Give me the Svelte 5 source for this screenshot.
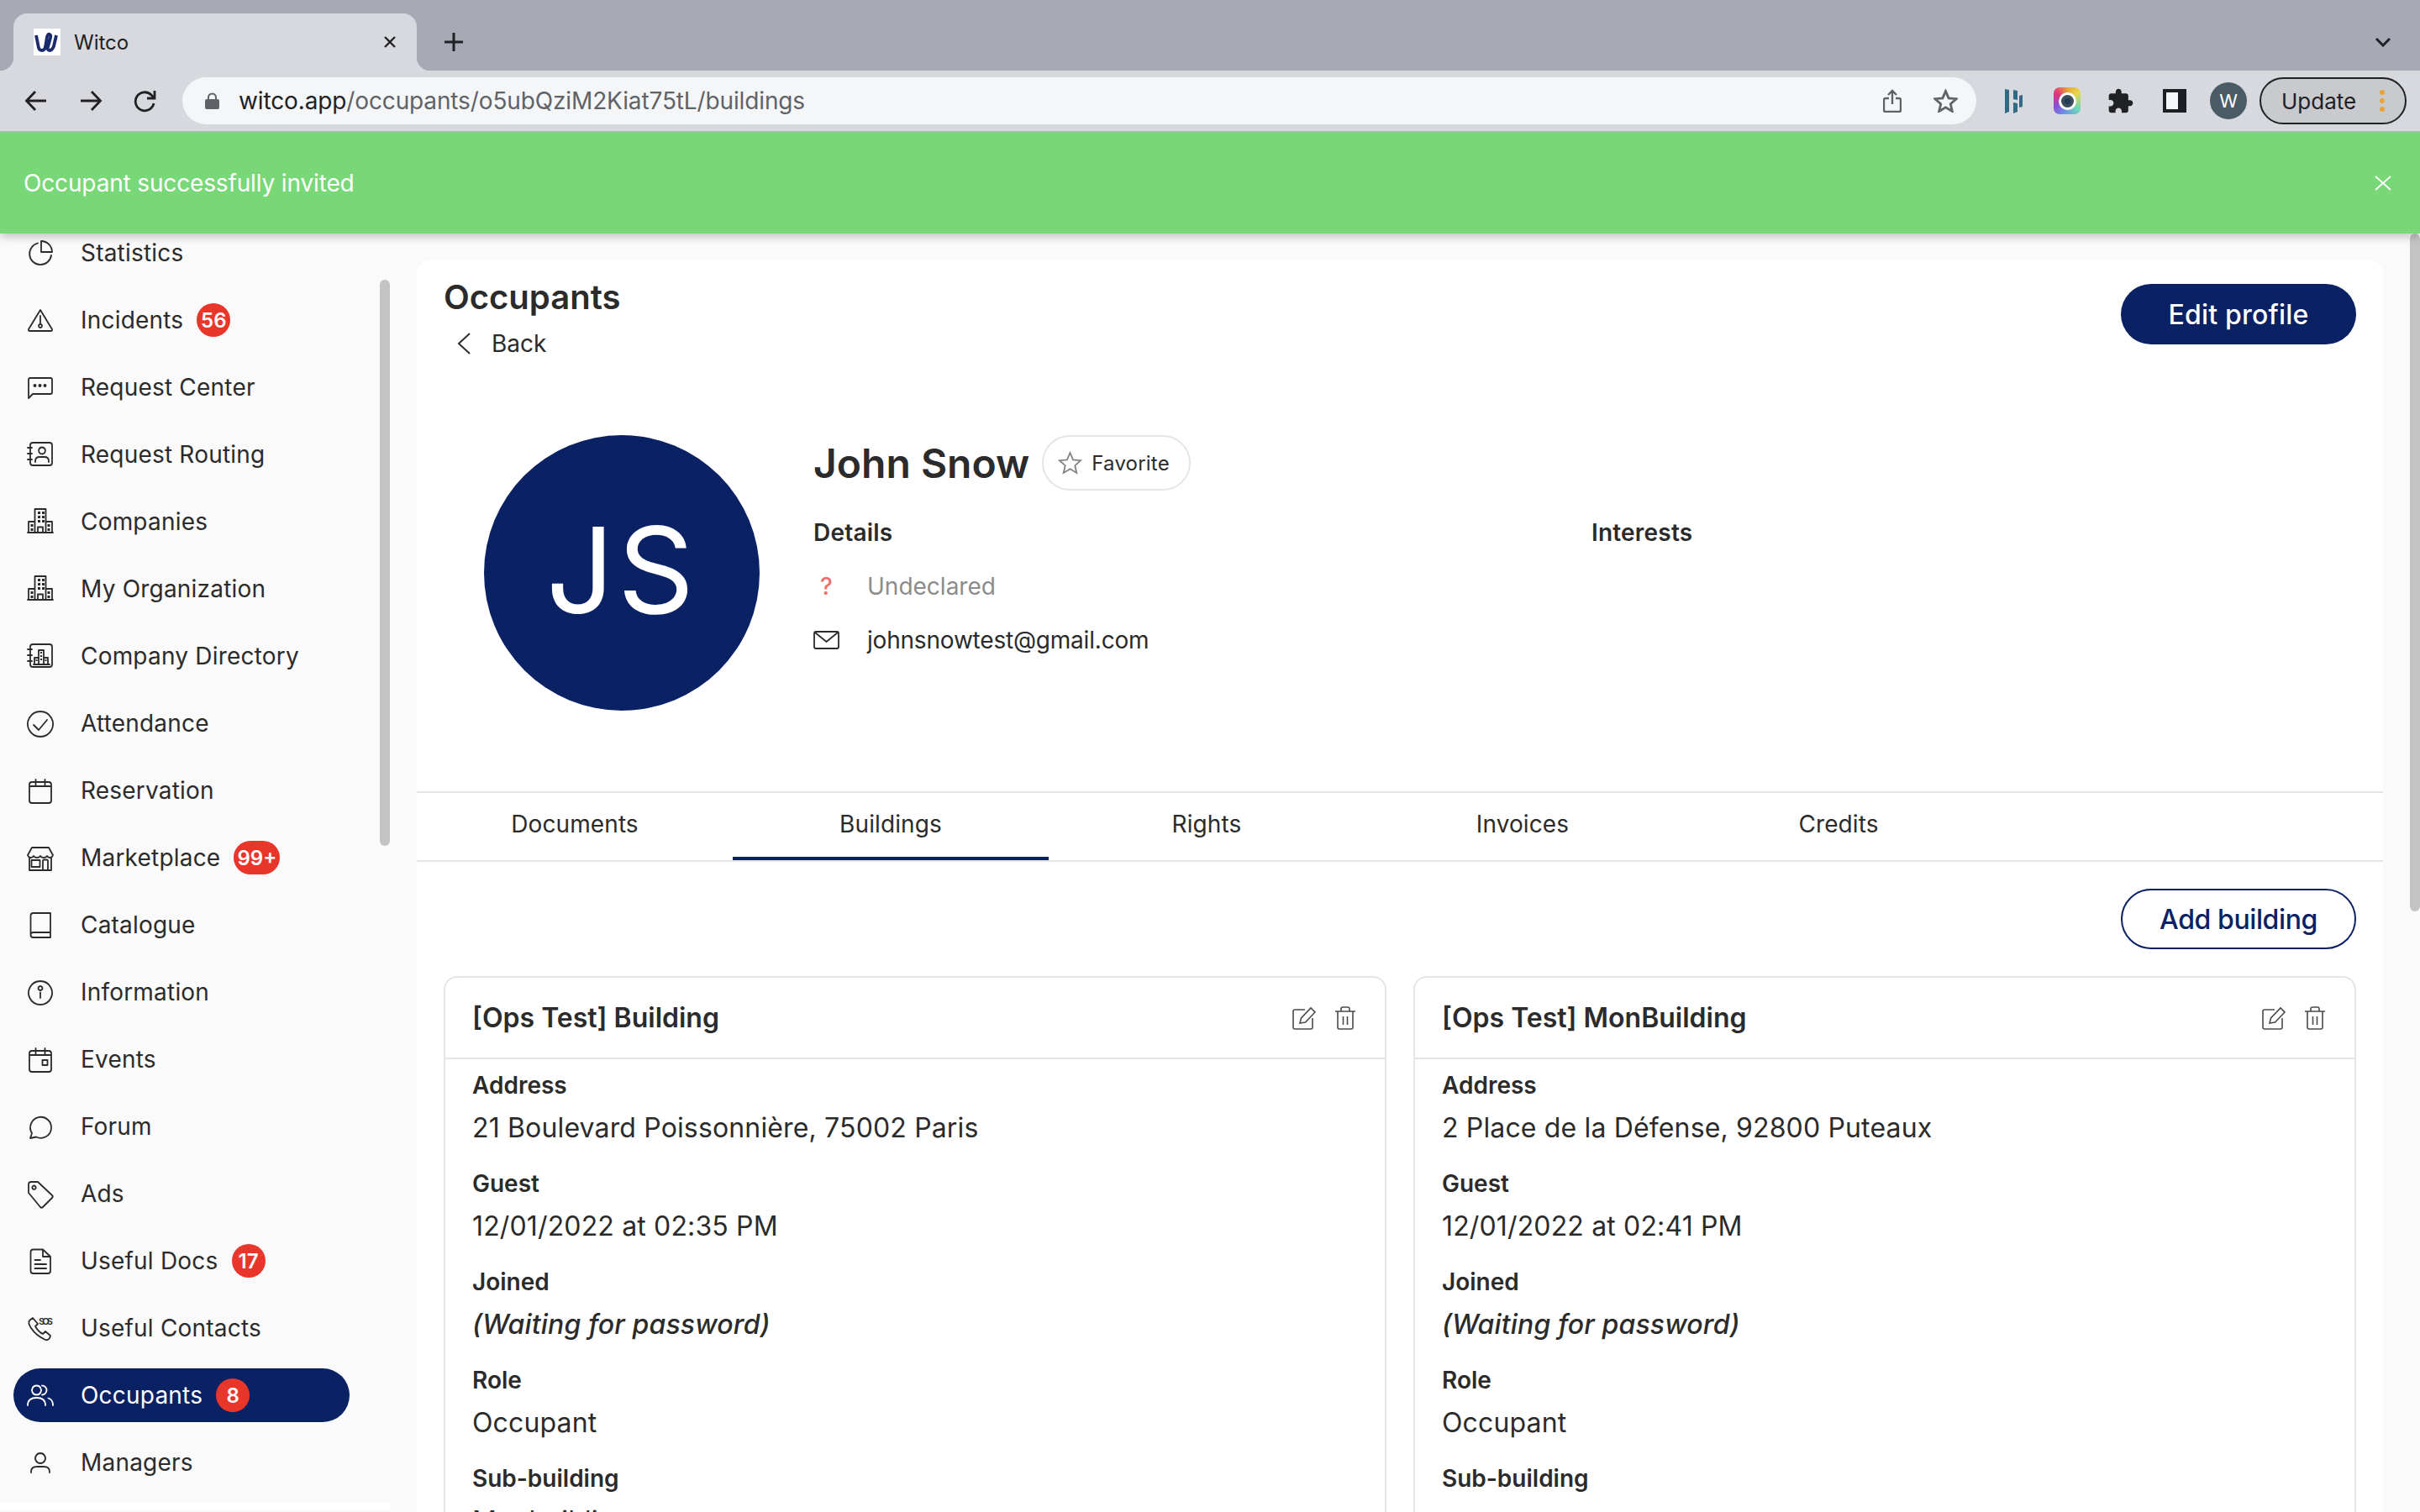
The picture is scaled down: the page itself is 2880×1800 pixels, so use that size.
<script>
  // small helpers so the icon table stays readable
  const dot = (x, y, r) => `M${x - r} ${y}a${r} ${r} 0 1 0 ${2 * r} 0a${r} ${r} 0 1 0 ${-2 * r} 0Z`;
  const sq = (x, y, s = 3) => `M${x} ${y}h${s}v${s}h${-s}Z`;
  const ticks = 'M1 8h5M1 15h5M1 22h5';
  const frame = 'M7 2h20q3 0 3 3v21q0 3-3 3H7q-3 0-3-3V5q0-3 3-3Z';
  const towers =
    'M9.5 29V1h13v28M2 29V16h7.5M22.5 16H30v13M1 29h30M13 29v-6.5h6V29' ;
  const towerWindows = [13, 18, 13, 18, 13, 18].map((x, i) => sq(x, 4 + 5 * Math.floor(i / 2))).join('')
    + sq(4.5, 19) + sq(4.5, 24) + sq(24.5, 19) + sq(24.5, 24);

  const navItems = [
    { label: 'Statistics', d: 'M13 4.5A13 13 0 1 0 29 19M17 2a13 13 0 0 1 13 13H17Z' },
    { label: 'Incidents', badge: '56', d: 'M16 4 30 27q.5 2-1.500 2H3.500q-2 0-1.500-2ZM16 11v9M16 21a2 2 0 1 0 .01 0Z' },
    { label: 'Request Center', d: 'M2 29V7q0-2 2-2h24q2 0 2 2v15q0 2-2 2H7Z', f: dot(9.5, 14, 2) + dot(15.5, 14, 2) + dot(21.500, 14, 2) },
    { label: 'Request Routing', d: `${frame}${ticks}M18 7.500a4 4 0 1 0 .01 0ZM10 25v-1q0-5 5-5h6q5 0 5 5v1` },
    { label: 'Companies', d: towers, f: towerWindows },
    { label: 'My Organization', d: towers, f: towerWindows },
    { label: 'Company Directory', d: `${frame}${ticks}M8 26h19M9 26v-8h5M14 26V9h6v17M20 18h5v8`, f: sq(16, 11, 2) + sq(16, 15, 2) + sq(16, 19, 2) + sq(10.500, 20, 2) + sq(21.500, 20, 2) },
    { label: 'Attendance', d: 'M16 2a15 15 0 1 0 .01 0ZM8 18l6 6 10-12' },
    { label: 'Reservation', d: 'M6 6h20q3 0 3 3v19q0 3-3 3H6q-3 0-3-3V9q0-3 3-3ZM3 11h26M10.500 3v7M21.500 3v7' },
    { label: 'Marketplace', badge: '99+', d: 'M6 4h20l5 9q-1 3-3.500 3T24 14q-1 2-4 2t-4-2q-1 2-4 2t-4-2q-1 2-3.500 2T1 13ZM3 16v15h26V16M5.500 19h10v8h-10ZM19 31V20q0-1.500 1.500-1.500h3Q25 18.500 25 20v11' },
    { label: 'Catalogue', d: 'M28 25H7.500q-3 0-3 3V5q0-3 3-3H28v29H7.500q-3 0-3-3' },
    { label: 'Information', d: 'M16 3a14 14 0 1 0 .01 0ZM16 9a2.500 2.500 0 1 0 .01 0ZM16 16.500V23' },
    { label: 'Events', d: 'M6 6h20q3 0 3 3v19q0 3-3 3H6q-3 0-3-3V9q0-3 3-3ZM3 11h26M10.500 3v7M21.500 3v7M18.500 17h6v6h-6Z' },
    { label: 'Forum', d: 'M4 30l2-6A12.500 12.500 0 1 1 11 28.500Z' },
    { label: 'Ads', d: 'M2 5q0-3 3-3h8l17 16q1.500 1.500 0 3L19 32q-1.500 1.500-3 0L2 15ZM8.500 6.500a2.200 2.200 0 1 0 .01 0Z' },
    { label: 'Useful Docs', badge: '17', d: 'M7.500 2.500H19L28 11v17q0 3-3 3H7.500q-3 0-3-3V5.500q0-3 3-3ZM19 2.500V11h9M9.500 15H16M9.500 20H23M9.500 25H23' },
    { label: 'Useful Contacts', sos: true, d: 'M7 4 3 7q-2 3 2 9 6 9 17 14 3 1 5-2l1-3-6-5-3 3q-5-2-9-9l3-3Z' },
    { label: 'Occupants', badge: '8', active: true, d: 'M11.500 4.500a5.500 5.500 0 1 0 .01 0ZM1 28q0-9 10.500-9T22 28M18 4.500a5.500 5.500 0 0 1 0 11M25.500 19.500Q31 21 31 28' },
    { label: 'Managers', d: 'M16 5a6 6 0 1 0 .01 0ZM5 28v-1q0-6 7-6h8q7 0 7 6v1' }
  ];

  const tabs = ['Documents', 'Buildings', 'Rights', 'Invoices', 'Credits'];

  const buildings = [
    { name: '[Ops Test] Building', address: '21 Boulevard Poissonnière, 75002 Paris', guest: '12/01/2022 at 02:35 PM', sub: 'Monbuilding' },
    { name: '[Ops Test] MonBuilding', address: '2 Place de la Défense, 92800 Puteaux', guest: '12/01/2022 at 02:41 PM', sub: '' }
  ];
</script>

<div class="app">
  <div class="tabstrip">
    <div class="tab">
      <svg class="favicon" viewBox="0 0 32 32">
        <rect width="32" height="32" fill="#fff" />
        <path d="M3 8l3 15q1 3 4 3t4-4l2-12q1-4 3-3t1 4l-3 11q-1 4 2 4t5-5l3-13" fill="none" stroke="#1b2a6b" stroke-width="3.800" />
      </svg>
      <span class="tabtitle">Witco</span>
      <svg class="tabclose" viewBox="0 0 16 16"><path d="M2 2l12 12M14 2 2 14" /></svg>
    </div>
    <svg class="newtab" viewBox="0 0 24 24"><path d="M12 1v22M1 12h22" /></svg>
    <svg class="tabmenu" viewBox="0 0 20 12"><path d="M2 2l8 8 8-8" /></svg>
  </div>

  <div class="toolbar">
    <svg class="navbtn first" viewBox="0 0 28 28"><path d="M26 14H3M13 3 2.500 14 13 25" /></svg>
    <svg class="navbtn" viewBox="0 0 28 28"><path d="M2 14h23M15 3l10.500 11L15 25" /></svg>
    <svg class="navbtn" viewBox="0 0 28 28"><path d="M24 17a11 11 0 1 1-3-10l4 4M25 2v9h-9" /></svg>
    <div class="omnibox">
      <svg class="lock" viewBox="0 0 17 20"><path d="M4 9V6a4.500 4.500 0 0 1 9 0v3" fill="none" stroke="#5f6368" stroke-width="2" /><rect y="8" width="17" height="12" rx="2" fill="#5f6368" /></svg>
      <span class="url">witco.app<span class="urlpath">/occupants/o5ubQziM2Kiat75tL/buildings</span></span>
      <svg class="share" viewBox="0 0 22 28"><path d="M7 11H3q-2 0-2 2v12q0 2 2 2h16q2 0 2-2V13q0-2-2-2h-4M11 18V2M6 7l5-5 5 5" /></svg>
      <svg class="star" viewBox="0 0 29 28"><path d="M14.500 2.500l3.600 8.400 9 .8-6.800 6 2 8.800-7.800-4.700-7.800 4.700 2-8.800-6.800-6 9-.8Z" /></svg>
    </div>
    <svg class="ext dash" viewBox="0 0 21 30">
      <path d="M0 1l5 1v26l-5 2ZM10 2l5 1v11l-5-1ZM10 17l5 1v10l-5 2ZM17 9l4-1v14l-4 1Z" fill="#2f6b85" />
    </svg>
    <div class="ext lens"><span class="lenseye"></span></div>
    <svg class="ext puzzle" viewBox="1.500 .5 22 22"><path d="M20.500 11H19V7c0-1.100-.9-2-2-2h-4V3.500C13 2.120 11.880 1 10.500 1S8 2.120 8 3.500V5H4c-1.100 0-1.990.9-1.990 2v3.800H3.500c1.490 0 2.700 1.210 2.700 2.700s-1.210 2.700-2.700 2.700H2V20c0 1.100.9 2 2 2h3.800v-1.500c0-1.490 1.210-2.700 2.700-2.700 1.490 0 2.700 1.210 2.700 2.700V22H17c1.100 0 2-.9 2-2v-4h1.500c1.380 0 2.500-1.120 2.500-2.500S21.880 11 20.500 11z" fill="#202124" /></svg>
    <div class="ext panel"></div>
    <div class="ext profilebtn">W</div>
    <div class="update">
      <span>Update</span>
      <span class="kebab"><i></i><i></i><i></i></span>
    </div>
  </div>

  <div class="page">
    <div class="banner">
      <span>Occupant successfully invited</span>
      <svg class="bannerclose" viewBox="0 0 20 18"><path d="M1 1l18 16M19 1 1 17" /></svg>
    </div>

    <aside class="sidebar">
      {#each navItems as item}
        <div class="navrow" class:active={item.active}>
          <svg class="navicon" viewBox="0 0 32 32">
            <path d={item.d} />
            {#if item.f}<path class="solid" d={item.f} />{/if}
            {#if item.sos}<text x="14" y="12" textLength="17" class="sos">SOS</text>{/if}
          </svg>
          <span class="navlabel">{item.label}</span>
          {#if item.badge}<span class="badge" class:wide={item.badge.length > 2}>{item.badge}</span>{/if}
        </div>
      {/each}
      <div class="sidefoot"></div>
      <div class="thumb"></div>
    </aside>

    <main class="main">
      <div class="head">
        <div>
          <h1>Occupants</h1>
          <div class="back">
            <svg viewBox="0 0 16 26"><path d="M15 1 2 13l13 12" /></svg>
            <span>Back</span>
          </div>
        </div>
        <button class="btn solid-btn">Edit profile</button>
      </div>

      <section class="profile">
        <div class="avatar">JS</div>
        <div class="info">
          <div class="namerow">
            <h2>John Snow</h2>
            <div class="favorite">
              <svg viewBox="0 0 29 28"><path d="M14.500 2l3.600 8.400 9 .8-6.800 6 2 8.800-7.800-4.700-7.800 4.700 2-8.800-6.800-6 9-.8Z" /></svg>
              <span>Favorite</span>
            </div>
          </div>
          <div class="detailcols">
            <div>
              <div class="sublabel">Details</div>
              <div class="contact muted"><span class="qmark">?</span><span>Undeclared</span></div>
              <div class="contact">
                <svg class="mail" viewBox="0 0 31 22"><path d="M3 1h25q2 0 2 2v16q0 2-2 2H3q-2 0-2-2V3q0-2 2-2ZM2 2l13.500 11L29 2" /></svg>
                <span class="email">johnsnowtest@gmail.com</span>
              </div>
            </div>
            <div class="sublabel">Interests</div>
          </div>
        </div>
      </section>

      <nav class="tabsbar">
        {#each tabs as t}
          <div class="tabitem" class:current={t === 'Buildings'}>{t}</div>
        {/each}
      </nav>

      <div class="addrow"><button class="btn outline-btn">Add building</button></div>

      <div class="buildings">
        {#each buildings as b}
          <article class="bcard">
            <header class="bhead">
              <span class="btitle">{b.name}</span>
              <svg class="baction" viewBox="0 0 28 28"><path d="M15 4H3q-2 0-2 2v19q0 2 2 2h19q2 0 2-2V14M9 20l1.500-6L22 2l5 5-11.500 12Z" /></svg>
              <svg class="baction trash" viewBox="0 0 26 28"><path d="M1 6h24M8 6V3q0-2 2-2h6q2 0 2 2v3M4 6v19q0 2 2 2h14q2 0 2-2V6M10.500 12v10M15.500 12v10" /></svg>
            </header>
            <div class="bbody">
              <div class="flabel">Address</div>
              <div class="fvalue">{b.address}</div>
              <div class="flabel">Guest</div>
              <div class="fvalue">{b.guest}</div>
              <div class="flabel">Joined</div>
              <div class="fvalue waiting">(Waiting for password)</div>
              <div class="flabel">Role</div>
              <div class="fvalue">Occupant</div>
              <div class="flabel">Sub-building</div>
              <div class="fvalue">{b.sub}</div>
            </div>
          </article>
        {/each}
      </div>
    </main>

    <div class="pagethumb"></div>
  </div>
</div>

<style>
  :global(body) {
    margin: 0;
  }

  .app {
    width: 2880px;
    height: 1800px;
    overflow: hidden;
    display: flex;
    flex-direction: column;
    font-family: Inter, "Liberation Sans", sans-serif;
    color: #2b2b2b;
  }

  /* browser chrome */
  .tabstrip {
    height: 84px;
    flex: none;
    background: #a7a9b4;
    display: flex;
    align-items: flex-end;
    padding-left: 16px;
    box-sizing: border-box;
  }

  .tab {
    position: relative;
    width: 480px;
    height: 68px;
    box-sizing: border-box;
    padding: 0 24px 0 24px;
    background: #d8d9de;
    border-radius: 16px 16px 0 0;
    display: flex;
    align-items: center;
  }

  .tab::before,
  .tab::after {
    content: '';
    position: absolute;
    bottom: 0;
    width: 16px;
    height: 16px;
  }

  .tab::before {
    left: -16px;
    background: radial-gradient(circle at 0 0, transparent 16px, #d8d9de 16.500px);
  }

  .tab::after {
    right: -16px;
    background: radial-gradient(circle at 100% 0, transparent 16px, #d8d9de 16.500px);
  }

  .favicon {
    width: 32px;
    height: 32px;
  }

  .tabtitle {
    margin-left: 16px;
    flex: 1;
    font-size: 24px;
    color: #202124;
  }

  .tabclose {
    width: 16px;
    height: 16px;
    fill: none;
    stroke: #202124;
    stroke-width: 2.400;
  }

  .newtab {
    width: 24px;
    height: 24px;
    margin: 0 0 22px 32px;
    fill: none;
    stroke: #202124;
    stroke-width: 3;
  }

  .tabmenu {
    width: 20px;
    height: 12px;
    margin: 0 34px 28px auto;
    fill: none;
    stroke: #202124;
    stroke-width: 3;
  }

  .toolbar {
    height: 73px;
    flex: none;
    box-sizing: border-box;
    background: #d8d9de;
    border-bottom: 1px solid #b4b4bb;
    padding-left: 29px;
    display: flex;
    align-items: center;
  }

  .navbtn {
    width: 28px;
    height: 28px;
    margin-left: 37px;
    fill: none;
    stroke: #202124;
    stroke-width: 2.800;
  }

  .navbtn.first {
    margin-left: 0;
  }

  .omnibox {
    margin-left: 30px;
    width: 2135px;
    height: 56px;
    border-radius: 28px;
    background: #f5f6f7;
    display: flex;
    align-items: center;
    padding: 0 22px 0 27px;
    box-sizing: border-box;
  }

  .lock {
    width: 17px;
    height: 20px;
  }

  .url {
    margin-left: 23px;
    flex: 1;
    font-size: 28px;
    letter-spacing: -0.13px;
    color: #202124;
  }

  .urlpath {
    color: #5f6368;
  }

  .share {
    width: 22px;
    height: 28px;
    fill: none;
    stroke: #5f6368;
    stroke-width: 2.400;
  }

  .star {
    width: 29px;
    height: 28px;
    margin-left: 38px;
    fill: none;
    stroke: #5f6368;
    stroke-width: 2.800;
  }

  .ext {
    flex: none;
  }

  .dash {
    width: 21px;
    height: 30px;
    margin-left: 34px;
  }

  .lens {
    width: 32px;
    height: 32px;
    margin-left: 37px;
    border-radius: 7px;
    background: conic-gradient(#e8a23a, #e6d84a 15%, #6fd8b8 35%, #6a8de8 55%, #8a4fd8 68%, #e0357a 85%, #e8a23a);
    display: flex;
    align-items: center;
    justify-content: center;
  }

  .lenseye {
    width: 21px;
    height: 21px;
    box-sizing: border-box;
    border-radius: 50%;
    border: 3px solid #fff;
    background: radial-gradient(circle, #1f3a5c 0 3px, #3e4c58 4px 100%);
  }

  .puzzle {
    width: 30px;
    height: 30px;
    margin-left: 33px;
  }

  .panel {
    width: 28px;
    height: 28px;
    margin-left: 35px;
    box-sizing: border-box;
    border: solid #1e1f24;
    border-width: 4px 10px 4px 4px;
    background: #f5f6f7;
  }

  .profilebtn {
    width: 44px;
    height: 44px;
    margin-left: 28px;
    border-radius: 50%;
    background: #4a5b65;
    color: #fff;
    font-size: 22px;
    display: flex;
    align-items: center;
    justify-content: center;
  }

  .update {
    margin-left: 15px;
    width: 175px;
    height: 56px;
    box-sizing: border-box;
    border: 2px solid #202124;
    border-radius: 28px;
    background: #c9cace;
    display: flex;
    align-items: center;
    padding-left: 24px;
    font-size: 26px;
    color: #202124;
  }

  .kebab {
    margin-left: auto;
    margin-right: 24px;
    display: flex;
    flex-direction: column;
    gap: 4px;
  }

  .kebab i {
    width: 6px;
    height: 6px;
    border-radius: 50%;
    background: #e8a33d;
  }

  /* app */
  .page {
    position: relative;
    flex: 1;
    min-height: 0;
    display: flex;
    background: #fafafa;
    overflow: hidden;
  }

  .banner {
    position: absolute;
    top: 0;
    left: 0;
    right: 0;
    height: 121px;
    z-index: 5;
    background: #78d777;
    color: #fff;
    font-size: 28px;
    letter-spacing: -0.15px;
    display: flex;
    align-items: center;
    justify-content: space-between;
    padding: 0 34px 0 28px;
    box-sizing: border-box;
    box-shadow: 0 4px 10px rgba(0, 0, 0, 0.22);
  }

  .bannerclose {
    width: 20px;
    height: 18px;
    fill: none;
    stroke: #fff;
    stroke-width: 1.800;
  }

  .sidebar {
    position: relative;
    width: 496px;
    flex: none;
    box-sizing: border-box;
    padding-top: 112px;
  }

  .navrow {
    width: 400px;
    height: 64px;
    margin: 0 0 16px 16px;
    padding-left: 16px;
    box-sizing: border-box;
    border-radius: 32px;
    display: flex;
    align-items: center;
    font-size: 28px;
    letter-spacing: 0.2px;
  }

  .navrow.active {
    background: #0a2164;
    color: #fff;
  }

  .navicon {
    width: 32px;
    height: 32px;
    flex: none;
    overflow: visible;
    fill: none;
    stroke: currentColor;
    stroke-width: 1.800;
    stroke-linejoin: round;
    stroke-linecap: round;
  }

  .navicon .solid {
    fill: currentColor;
    stroke: none;
  }

  .navicon .sos {
    fill: currentColor;
    stroke: none;
    font-size: 11px;
    font-weight: 600;
  }

  .navlabel {
    margin-left: 32px;
  }

  .badge {
    width: 40px;
    height: 40px;
    margin-left: 16px;
    border-radius: 20px;
    background: #e9362a;
    color: #fff;
    font-size: 24px;
    font-weight: 600;
    letter-spacing: 0;
    display: flex;
    align-items: center;
    justify-content: center;
  }

  .badge.wide {
    width: 55px;
  }

  .sidefoot {
    width: 464px;
    height: 8px;
    margin-top: 3px;
    background: #fff;
  }

  .thumb {
    position: absolute;
    left: 452px;
    top: 176px;
    width: 12px;
    height: 674px;
    border-radius: 6px;
    background: #c4c4c4;
  }

  .pagethumb {
    position: absolute;
    left: 2868px;
    top: 121px;
    width: 12px;
    height: 807px;
    border-radius: 6px;
    background: #c4c4c4;
  }

  .main {
    width: 2340px;
    flex: none;
    margin-top: 153px;
    background: #fff;
    border-radius: 16px 16px 0 0;
    align-self: flex-start;
  }

  .head {
    display: flex;
    justify-content: space-between;
    align-items: flex-start;
    padding: 20px 32px 0;
  }

  h1 {
    margin: 0;
    font-size: 40px;
    line-height: 48px;
    font-weight: 600;
  }

  .back {
    margin-top: 11px;
    height: 40px;
    padding-left: 16px;
    display: flex;
    align-items: center;
    gap: 25px;
    font-size: 28px;
  }

  .back svg {
    width: 16px;
    height: 26px;
    fill: none;
    stroke: #2b2b2b;
    stroke-width: 2;
  }

  .btn {
    width: 280px;
    height: 72px;
    border-radius: 36px;
    font-family: inherit;
    font-size: 32px;
    font-weight: 500;
    padding: 0;
  }

  .solid-btn {
    margin-top: 8px;
    background: #0a2164;
    border: none;
    color: #fff;
    letter-spacing: 0.2px;
  }

  .outline-btn {
    background: #fff;
    border: 2px solid #0a2164;
    color: #0a2164;
    letter-spacing: -0.4px;
  }

  .profile {
    display: flex;
    margin-top: 89px;
    padding-left: 80px;
  }

  .avatar {
    width: 328px;
    height: 328px;
    box-sizing: border-box;
    padding-bottom: 8px;
    flex: none;
    border-radius: 50%;
    background: #0a2164;
    color: #fff;
    font-size: 142px;
    letter-spacing: 4px;
    font-weight: 400;
    display: flex;
    align-items: center;
    justify-content: center;
  }

  .info {
    margin-left: 64px;
    flex: 1;
  }

  .namerow {
    height: 66px;
    display: flex;
    align-items: center;
    gap: 15px;
  }

  h2 {
    margin: 0;
    font-size: 48px;
    font-weight: 600;
  }

  .favorite {
    width: 177px;
    height: 66px;
    box-sizing: border-box;
    border: 2px solid #e5e5e5;
    border-radius: 33px;
    padding-left: 17px;
    display: flex;
    align-items: center;
    gap: 11px;
    font-size: 24px;
    letter-spacing: 0.2px;
  }

  .favorite svg {
    width: 29px;
    height: 28px;
    fill: none;
    stroke: #808080;
    stroke-width: 1.800;
  }

  .detailcols {
    margin-top: 30px;
    display: grid;
    grid-template-columns: 926px 1fr;
  }

  .sublabel {
    font-size: 28px;
    font-weight: 600;
    letter-spacing: 0.2px;
    line-height: 40px;
  }

  .contact {
    margin-top: 24px;
    height: 40px;
    display: flex;
    align-items: center;
    font-size: 28px;
  }

  .muted {
    color: #8c8c8c;
  }

  .qmark {
    width: 31px;
    text-align: center;
    color: #ee6e6e;
    font-weight: 500;
  }

  .contact span:last-child {
    margin-left: 33px;
  }

  .email {
    letter-spacing: -0.2px;
  }

  .mail {
    width: 31px;
    height: 22px;
    fill: none;
    stroke: #2b2b2b;
    stroke-width: 1.800;
  }

  .tabsbar {
    margin-top: 96px;
    display: flex;
    border-top: 2px solid #e5e5e5;
    border-bottom: 2px solid #e5e5e5;
  }

  .tabitem {
    width: 376px;
    height: 80px;
    box-sizing: border-box;
    padding-bottom: 2px;
    border-bottom: 4px solid transparent;
    display: flex;
    align-items: center;
    justify-content: center;
    font-size: 28px;
    letter-spacing: 0.1px;
  }

  .tabitem.current {
    border-bottom-color: #0a2164;
  }

  .addrow {
    margin-top: 32px;
    padding-right: 32px;
    display: flex;
    justify-content: flex-end;
  }

  .buildings {
    margin-top: 32px;
    padding: 0 32px;
    display: grid;
    grid-template-columns: 1fr 1fr;
    gap: 32px;
  }

  .bcard {
    border: 2px solid #e5e5e5;
    border-radius: 16px 16px 0 0;
  }

  .bhead {
    height: 97px;
    box-sizing: border-box;
    padding: 0 34px 0 32px;
    border-bottom: 2px solid #e5e5e5;
    display: flex;
    align-items: center;
    gap: 22px;
  }

  .btitle {
    flex: 1;
    font-size: 32px;
    font-weight: 600;
  }

  .baction {
    width: 28px;
    height: 28px;
    fill: none;
    stroke: #4a4a4a;
    stroke-width: 1.600;
  }

  .baction.trash {
    width: 26px;
  }

  .bbody {
    padding: 11px 32px 0;
  }

  .flabel {
    font-size: 28px;
    font-weight: 600;
    line-height: 40px;
  }

  .fvalue {
    margin: 9px 0 24px;
    min-height: 44px;
    font-size: 32px;
    line-height: 44px;
    letter-spacing: 0.15px;
  }

  .waiting {
    font-style: italic;
    font-weight: 500;
  }
</style>
